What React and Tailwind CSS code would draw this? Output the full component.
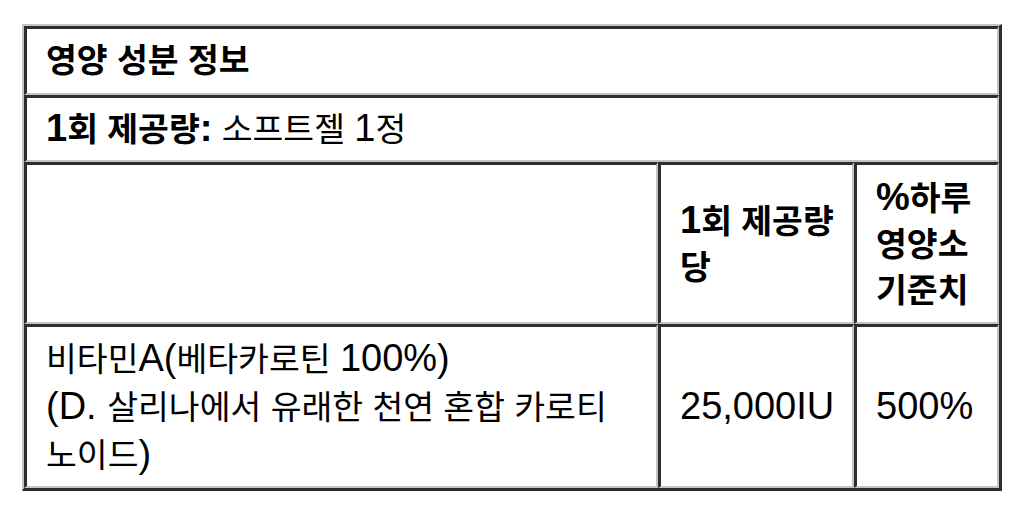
import React from 'react';

// Latin runs are set a bit larger than the Hangul, as in the reference
const L = ({ children }) => <span className="text-[38px]">{children}</span>;

const cell = 'border-t-[3px] border-l-[3px] border-r-2 border-b-2 border-t-[#2e2e2e] border-l-[#2e2e2e] border-r-[#c4c4c4] border-b-[#c4c4c4] px-[19px] align-middle';

export default function App() {
  return (
    <div className="min-h-screen bg-white pl-[22px] pt-[24px] text-black" style={{ fontFamily: '"Liberation Sans", "Noto Sans CJK KR", sans-serif' }}>
      <table className="w-[980px] table-fixed border-separate border-spacing-0 border-t-2 border-l-2 border-r-[3px] border-b-[3px] border-t-[#c4c4c4] border-l-[#c4c4c4] border-r-[#2e2e2e] border-b-[#2e2e2e] text-[33.5px] leading-[46px]">
        <colgroup>
          <col className="w-[634px]" />
          <col className="w-[196px]" />
          <col />
        </colgroup>
        <tbody>
          <tr>
            <td colSpan={3} className={`${cell} h-[69px] font-bold`}>영양 성분 정보</td>
          </tr>
          <tr>
            <td colSpan={3} className={`${cell} h-[67px]`}>
              <span className="font-bold"><L>1</L>회 제공량<L>:</L></span> 소프트젤 <L>1</L>정
            </td>
          </tr>
          <tr>
            <td className={`${cell} h-[162px]`}></td>
            <td className={`${cell} whitespace-nowrap font-bold`}>
              <L>1</L>회 제공량<br />당
            </td>
            <td className={`${cell} whitespace-nowrap font-bold`}>
              <L>%</L>하루<br />영양소<br />기준치
            </td>
          </tr>
          <tr>
            <td className={`${cell} h-[164px]`}>
              비타민<L>A(</L>베타카로틴 <L>100%)</L>
              <br />
              <L>(D. </L>살리나에서 유래한 천연 혼합 카로티
              <br />
              노이드<L>)</L>
            </td>
            <td className={cell}><L>25,000IU</L></td>
            <td className={cell}><L>500%</L></td>
          </tr>
        </tbody>
      </table>
    </div>
  );
}
